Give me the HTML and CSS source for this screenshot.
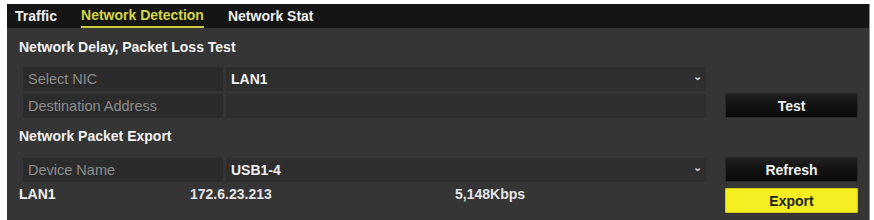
FILE: index.html
```html
<!DOCTYPE html>
<html lang="en">
<head>
  <meta charset="UTF-8" />
  <title>Network Detection</title>
  <link rel="stylesheet" href="styles.css">
</head>
<body>

<div class="panel">
  <div class="tabs">
    <span class="tab">Traffic</span>
    <span class="tab active">Network Detection</span>
    <span class="tab">Network Stat</span>
  </div>

  <div class="section-title">Network Delay, Packet Loss Test</div>

  <div class="form-row">
    <div class="cell label">Select NIC</div>
    <div class="cell value">LAN1<span class="arrow">&#8964;</span></div>
  </div>
  <div class="form-row">
    <div class="cell label">Destination Address</div>
    <div class="cell value"></div>
    <button class="btn">Test</button>
  </div>

  <div class="section-title second">Network Packet Export</div>

  <div class="form-row">
    <div class="cell label">Device Name</div>
    <div class="cell value">USB1-4<span class="arrow">&#8964;</span></div>
    <button class="btn">Refresh</button>
  </div>

  <div class="status-row">
    <span class="nic">LAN1</span>
    <span class="ip">172.6.23.213</span>
    <span class="rate">5,148Kbps</span>
    <button class="btn btn-export">Export</button>
  </div>
</div>

</body>
</html>
```

FILE: styles.css
```css
* { box-sizing: border-box; }

body {
  margin: 0;
  background: #fff;
  font-family: "Liberation Sans", Arial, sans-serif;
}

.panel {
  margin: 4px 0 0 7px;
  width: 863px;
  height: 216px;
  background: #353535;
  border-right: 1px solid #8a8a8a;
  color: #eee;
}

.tabs {
  height: 24px;
  background: #151515;
  display: flex;
  gap: 24px;
  padding-left: 8px;
}

.tab {
  font-size: 14px;
  font-weight: bold;
  line-height: 24px;
  color: #f0f0f0;
}

.tab.active {
  color: #d3d648;
  border-bottom: 2px solid #c8cc3c;
  line-height: 22px;
}

.section-title {
  height: 39px;
  line-height: 39px;
  padding-left: 12px;
  font-size: 14px;
  font-weight: bold;
  color: #f2f2f2;
}

.section-title.second {
  height: 37px;
  line-height: 33px;
}

.form-row {
  display: flex;
  align-items: flex-end;
  gap: 3px;
  padding-left: 16px;
  margin-bottom: 2px;
}

.cell {
  height: 24px;
  line-height: 24px;
  background: #2b2b2b;
}

.label {
  width: 200px;
  padding-left: 5px;
  font-size: 14.5px;
  color: #8c8c8c;
}

.value {
  width: 480px;
  padding-left: 5px;
  font-size: 14px;
  font-weight: bold;
  color: #f2f2f2;
  background: #2e2e2e;
  position: relative;
}

.arrow {
  position: absolute;
  right: 4px;
  top: -3px;
  font-size: 11px;
  color: #ccc;
}

.btn {
  margin-left: 16px;
  width: 133px;
  height: 25px;
  border: 1px solid #2a2a2a;
  border-radius: 1px;
  background: linear-gradient(#1f1f1f, #111 55%, #0c0c0c);
  color: #f0f0f0;
  font-family: inherit;
  font-size: 14px;
  font-weight: bold;
  padding: 0;
}

.status-row {
  display: flex;
  align-items: flex-start;
  padding-left: 12px;
  margin-top: 1px;
  font-size: 14px;
  font-weight: bold;
  color: #f0f0f0;
}

.status-row span {
  line-height: 20px;
}

.nic { width: 171px; }
.ip { width: 265px; color: #e4e4e4; }
.rate { width: 254px; color: #e4e4e4; }

.btn-export {
  margin-top: 4px;
  background: #f4ee22;
  border: 1px solid #d0cc10;
  color: #222;
}
```
